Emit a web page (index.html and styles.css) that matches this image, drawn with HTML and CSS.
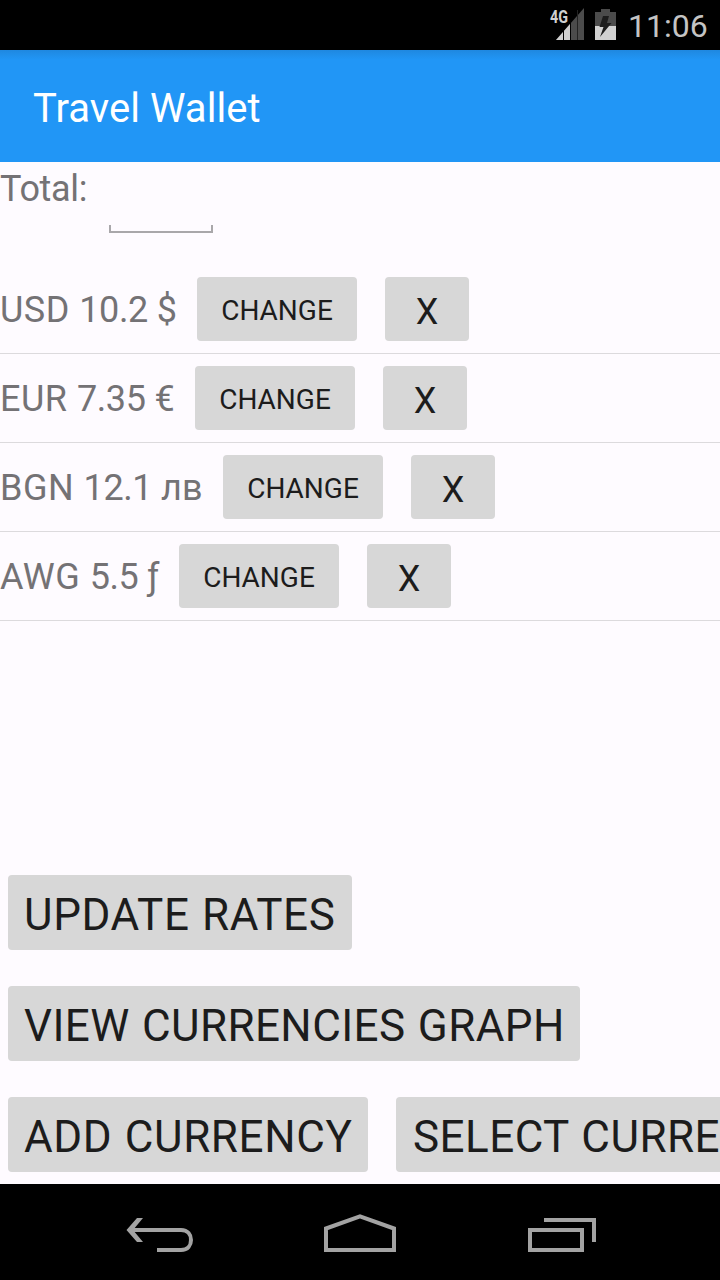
FILE: index.html
```
<!DOCTYPE html>
<html lang="en">
<head>
<meta charset="utf-8">
<title>Travel Wallet</title>
<link rel="stylesheet" href="styles.css">
</head>
<body>
<div class="screen">
  <div class="status">
    <svg class="signal" width="36" height="32" viewBox="0 0 36 32">
      <path fill="#4b4b4b" d="M36 0V32H8Z"/>
      <path fill="#d0d0d0" d="M22 16V32H8Z"/>
      <path stroke="#000" stroke-width="1" d="M15.500 14V32M22.500 8V32"/>
      <path stroke="#222" stroke-width="1" d="M29.500 2V32"/>
      <text x="2" y="15" class="net" textLength="18" lengthAdjust="spacingAndGlyphs">4G</text>
    </svg>
    <svg class="battery" width="21" height="32" viewBox="0 0 21 32">
      <path fill="#4b4b4b" d="M6 0H15V3H21V18H0V3H6Z"/>
      <rect y="17" width="21" height="14" fill="#d0d0d0"/>
      <path fill="#1c1c1c" d="M8 7H14L12 14H16.500L5 28L8.500 18H4.500Z"/>
    </svg>
    <span class="clock">11:06</span>
  </div>
  <header class="appbar"><span class="title">Travel Wallet</span></header>
  <main class="content">
    <div class="total"><span class="total-label">Total:</span><div class="field"></div></div>
    <div class="list">
      <div class="row"><span class="amount usd"><span class="code">USD </span><span class="num">10.2</span> $</span><button class="btn change">CHANGE</button><button class="btn remove">X</button></div>
      <div class="row"><span class="amount eur"><span class="code">EUR </span><span class="num">7.35</span> €</span><button class="btn change">CHANGE</button><button class="btn remove">X</button></div>
      <div class="row"><span class="amount bgn"><span class="code">BGN </span><span class="num">12.1</span> лв</span><button class="btn change">CHANGE</button><button class="btn remove">X</button></div>
      <div class="row"><span class="amount awg"><span class="code">AWG </span><span class="num">5.5</span> ƒ</span><button class="btn change">CHANGE</button><button class="btn remove">X</button></div>
    </div>
    <div class="actions">
      <div class="line"><button class="btn big update">UPDATE RATES</button></div>
      <div class="line"><button class="btn big graph">VIEW CURRENCIES GRAPH</button></div>
      <div class="line"><button class="btn big add">ADD CURRENCY</button><button class="btn big select">SELECT CURRENCY</button></div>
    </div>
  </main>
  <nav class="navbar">
    <svg width="720" height="96" viewBox="0 0 720 96" fill="none" stroke="#a3a3a3" stroke-width="4">
      <path d="M130 46H181C188 46 191 51 191 56S188 66 181 66H157"/>
      <path fill="#a3a3a3" stroke="none" d="M126.500 46L137 34H143L133 46L143 58H137Z"/>
      <path d="M326 66V44.500L360 32.300L394 44.500V66Z"/>
      <path d="M530 46H582V66H530ZM544 36H594V58"/>
    </svg>
  </nav>
</div>
</body>
</html>
```
FILE: styles.css
```
body {
  margin: 0;
  background: #000;
}

.screen {
  width: 720px;
  height: 1280px;
  display: flex;
  flex-direction: column;
  overflow: hidden;
  font-family: Roboto, "Noto Sans", sans-serif;
}

.status {
  height: 50px;
  display: flex;
  justify-content: flex-end;
  align-items: flex-start;
  background: #000;
}

.signal {
  margin: 8px 11px 0 0;
}

.net {
  font: bold 18px Roboto, sans-serif;
  fill: #d0d0d0;
}

.battery {
  margin: 9px 12px 0 0;
}

.clock {
  width: 92px;
  padding-top: 7px;
  font-size: 32px;
  line-height: 38px;
  white-space: nowrap;
  color: #c4c4c4;
}

.appbar {
  height: 112px;
  display: flex;
  align-items: center;
  padding-left: 33px;
  background: linear-gradient(#1f88e0, #2196f6 10px, #2196f6);
}

.title {
  padding-top: 4px;
  font-size: 40px;
  letter-spacing: 0.05px;
  color: #fff;
}

.content {
  height: 1022px;
  display: flex;
  flex-direction: column;
  background: #fefbff;
}

.total {
  height: 103px;
  display: flex;
  align-items: flex-start;
}

.total-label {
  width: 109px;
  padding-top: 6px;
  font-size: 36px;
  line-height: 42px;
  letter-spacing: -0.35px;
  color: #747275;
}

.field {
  width: 100px;
  height: 6px;
  margin-top: 63px;
  border: 2px solid #a9a7aa;
  border-top: 0;
}

.row {
  height: 88px;
  display: flex;
  align-items: center;
  border-bottom: 1px solid #dcdadd;
}

.amount {
  padding-top: 2px;
  font-size: 36px;
  white-space: nowrap;
  color: #747275;
}

.code {
  letter-spacing: 0.5px;
}

.num {
  letter-spacing: -0.4px;
}

.usd {
  width: 197px;
}

.eur {
  width: 195px;
}

.bgn {
  width: 223px;
}

.awg {
  width: 179px;
}

.btn {
  flex: none;
  padding: 0;
  border: 0;
  border-radius: 4px;
  background: #d7d7d7;
  color: #1c1c1c;
  font-family: inherit;
  white-space: nowrap;
}

.change {
  width: 160px;
  height: 64px;
  padding-top: 2px;
  margin-right: 28px;
  font-size: 28px;
}

.remove {
  width: 84px;
  height: 64px;
  padding-top: 6px;
  font-size: 36px;
}

.actions {
  display: flex;
  flex-direction: column;
  gap: 36px;
  margin-top: auto;
  padding: 0 0 12px 8px;
}

.line {
  display: flex;
  gap: 28px;
}

.big {
  height: 75px;
  padding: 4px 0 0 16px;
  font-size: 44px;
  letter-spacing: 0.6px;
  word-spacing: 1px;
  text-align: left;
}

.update {
  width: 344px;
}

.graph {
  width: 572px;
  letter-spacing: 0.4px;
}

.add {
  width: 360px;
}

.select {
  width: 430px;
  padding-left: 17px;
  letter-spacing: 0.45px;
}

.navbar {
  height: 96px;
  background: #000;
}
```
